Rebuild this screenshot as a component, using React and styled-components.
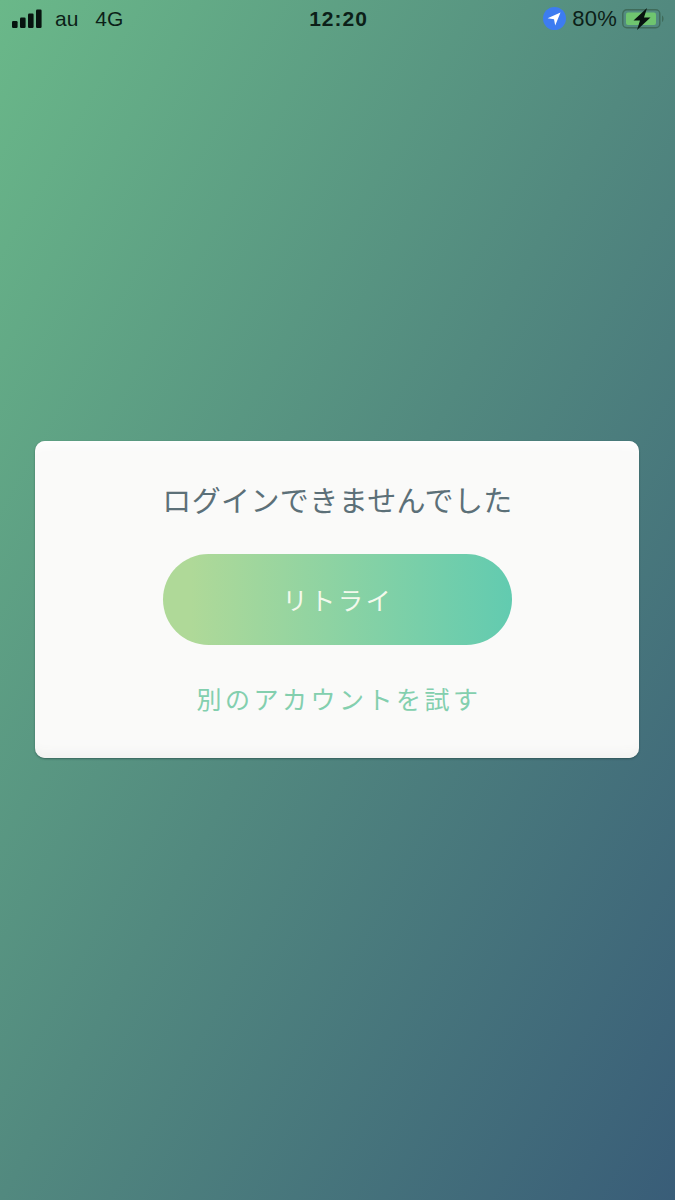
import React from 'react';
import styled, { createGlobalStyle } from 'styled-components';

const GlobalStyle = createGlobalStyle`
  html, body {
    margin: 0;
    padding: 0;
  }
  body {
    font-family: "Liberation Sans", "Noto Sans CJK JP", sans-serif;
  }
`;

const Screen = styled.div`
  width: 675px;
  height: 1200px;
  display: flex;
  flex-direction: column;
  overflow: hidden;
  background: linear-gradient(to bottom right, #6ab889 0%, #52897f 50%, #395d78 100%);
`;

const StatusBar = styled.div`
  height: 37px;
  flex: none;
  display: grid;
  grid-template-columns: 1fr auto 1fr;
  align-items: center;
  padding: 0 10px 0 12px;
  color: #0c1f18;
`;

const StatusLeft = styled.div`
  display: flex;
  align-items: center;
`;

const StatusRight = styled.div`
  display: flex;
  align-items: center;
  justify-content: flex-end;
`;

const Carrier = styled.span`
  font-size: 21px;
  margin-left: ${(p) => p.$gap}px;
`;

const Clock = styled.span`
  font-size: 21px;
  font-weight: 700;
  letter-spacing: 1px;
`;

const Percent = styled.span`
  font-size: 22px;
  letter-spacing: 0.2px;
  margin: 0 5px 0 6px;
`;

const Main = styled.main`
  flex: 1;
  display: flex;
  justify-content: center;
  align-items: center;
  padding: 0 1px 39px 0;
`;

const Card = styled.section`
  width: 604px;
  height: 317px;
  box-sizing: border-box;
  padding-top: 40px;
  display: flex;
  flex-direction: column;
  align-items: center;
  border-radius: 10px;
  background: #fafaf9;
  box-shadow: 0 1px 2px rgba(30, 60, 60, 0.55), inset 0 14px 12px -10px #ffffff, inset 0 -14px 12px -10px #f1f1ef;
`;

const Title = styled.h1`
  margin: 0 0 0 1px;
  height: 36px;
  line-height: 36px;
  font-size: 29px;
  font-weight: 400;
  letter-spacing: 0.4px;
  color: #5c7078;
  font-family: "Noto Sans CJK JP", sans-serif;
`;

const RetryButton = styled.button`
  width: 349px;
  height: 91px;
  margin-top: 37px;
  padding-left: 8px;
  border: none;
  border-radius: 46px;
  background: linear-gradient(to right, #afd998 8%, #62cbb0 100%);
  color: #f3f9ec;
  font-size: 25px;
  letter-spacing: 2.8px;
  font-family: "Noto Sans CJK JP", sans-serif;
`;

const AltLink = styled.a`
  margin: 35px 0 0 4px;
  height: 36px;
  line-height: 36px;
  font-size: 25px;
  letter-spacing: 3.5px;
  color: #83cfae;
  font-family: "Noto Sans CJK JP", sans-serif;
`;

const SignalIcon = () => (
  <svg width="31" height="20" viewBox="0 0 31 20">
    <rect x="0" y="12" width="5.6" height="7" rx="1.2" fill="#07130f" />
    <rect x="8" y="8.5" width="5.6" height="10.5" rx="1.2" fill="#07130f" />
    <rect x="16" y="4.5" width="5.6" height="14.5" rx="1.2" fill="#07130f" />
    <rect x="24" y="0.5" width="5.6" height="18.5" rx="1.2" fill="#07130f" />
  </svg>
);

const LocationIcon = () => (
  <svg width="23" height="23" viewBox="0 0 23 23">
    <circle cx="11.5" cy="11.5" r="11.5" fill="#3d7cf0" />
    <path d="M17.5 5.5 L4.6 11.2 L11 12.2 L12.2 18.6 Z" fill="#ffffff" />
  </svg>
);

const BatteryIcon = () => (
  <svg width="43" height="22" viewBox="0 0 43 22">
    <rect x="0.8" y="1.8" width="37" height="18" rx="4" fill="none" stroke="#3f6b5a" strokeWidth="1.4" />
    <rect x="4" y="4.5" width="30" height="12.5" rx="2" fill="#6fc56f" />
    <path d="M40 7.5 C42 8.5 42 13 40 14 Z" fill="#3f6b5a" />
    <path d="M25 0 L11.5 12.5 L18 12.5 L15 22 L28.5 9.5 L22 9.5 Z" fill="#07130f" />
  </svg>
);

const App = () => (
  <>
    <GlobalStyle />
    <Screen>
      <StatusBar>
        <StatusLeft>
          <SignalIcon />
          <Carrier $gap={12}>au</Carrier>
          <Carrier $gap={17}>4G</Carrier>
        </StatusLeft>
        <Clock>12:20</Clock>
        <StatusRight>
          <LocationIcon />
          <Percent>80%</Percent>
          <BatteryIcon />
        </StatusRight>
      </StatusBar>
      <Main>
        <Card>
          <Title>ログインできませんでした</Title>
          <RetryButton>リトライ</RetryButton>
          <AltLink>別のアカウントを試す</AltLink>
        </Card>
      </Main>
    </Screen>
  </>
);

export default App;
